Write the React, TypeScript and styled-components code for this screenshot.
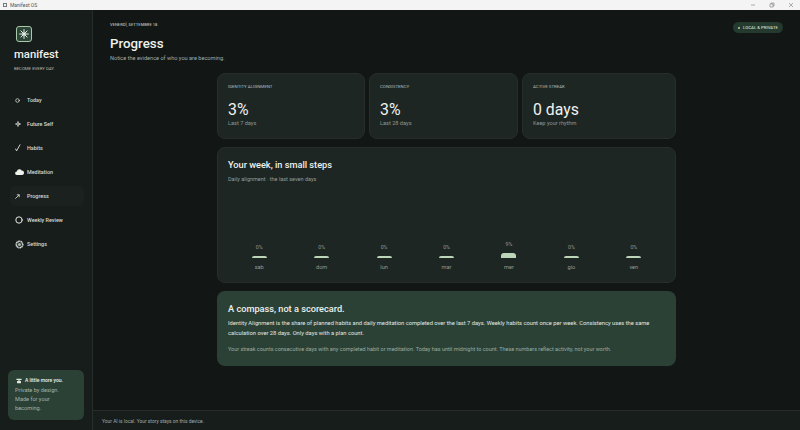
import styled, { createGlobalStyle } from "styled-components";
import { ReactNode } from "react";

const GlobalStyle = createGlobalStyle`
    html, body{
        margin:0;
        padding:0;
        width:800px;
        height:430px;
        overflow:hidden;
        background:#121716;
        font-family:Roboto, "Noto Sans", sans-serif;
    }
`;

const Shell = styled.div`
    width:800px;
    height:430px;
    display:flex;
    flex-direction:column;
`;

const TitleBar = styled.div`
    height:10px;
    flex:none;
    background:#f3f4f3;
    display:flex;
    align-items:center;
    padding:0 0 0 3px;
    gap:3px;
    color:#555;
    font-size:5px;
`;

const AppGlyph = styled.span`
    width:4px;
    height:4px;
    border:1px solid #777;
    box-sizing:border-box;
`;

const WindowButtons = styled.div`
    margin-left:auto;
    display:flex;
    align-items:center;
    color:#555;
`;

const WindowButton = styled.span`
    width:19px;
    height:10px;
    display:flex;
    align-items:center;
    justify-content:center;
`;

const Body = styled.div`
    flex:1;
    display:flex;
    min-height:0;
`;

const Sidebar = styled.aside`
    flex:none;
    border-right:1px solid #262d2b;
    background:#171d1b;
    padding:16px 8px 10px;
    width:76px;
    display:flex;
    flex-direction:column;
`;

const LogoMark = styled.div`
    width:16px;
    height:16px;
    margin-left:8px;
    box-sizing:border-box;
    border:1px solid #a9c9ab;
    border-radius:3px;
    background:#2c4437;
    display:flex;
    align-items:center;
    justify-content:center;
`;

const Brand = styled.div`
    margin:4px 0 0 6px;
    font-size:11.3px;
    line-height:17px;
    font-weight:500;
    color:#eef1ec;
`;

const Tagline = styled.div`
    margin:3px 0 0 6px;
    font-size:4.3px;
    line-height:6px;
    color:#b3bab5;
`;

const Nav = styled.nav`
    margin-top:18px;
    display:flex;
    flex-direction:column;
    gap:4px;
`;

const NavItem = styled.div<{ $active?: boolean }>`
    height:20px;
    margin-left:2px;
    border-radius:6px;
    display:flex;
    align-items:center;
    gap:3px;
    padding-left:5px;
    font-size:5.4px;
    font-weight:500;
    color:#d6dbd7;
    background:${({ $active }) => ($active ? "#1b211f" : "transparent")};
`;

const NavIcon = styled.span`
    width:9px;
    height:10px;
    flex:none;
    display:flex;
    align-items:center;
    justify-content:flex-start;
`;

const Note = styled.div`
    margin-top:auto;
    height:50px;
    box-sizing:border-box;
    border-radius:6px;
    background:#2b4136;
    padding:6px 7px;
    font-size:5.6px;
    line-height:9px;
    color:#a3b2a8;
`;

const NoteTitle = styled.div`
    display:flex;
    align-items:center;
    gap:3px;
    font-weight:500;
    color:#eef1ec;
    margin:0 0 1px 1px;
    font-size:5px;
`;

const Main = styled.main`
    flex:1;
    display:flex;
    flex-direction:column;
    min-width:0;
`;

const Scroll = styled.div`
    flex:1;
    padding:11px 17px 0;
    position:relative;
    background:#121716;
`;

const DateLine = styled.div`
    font-size:4.1px;
    line-height:8px;
    font-weight:500;
    color:#b3bab5;
`;

const PageTitle = styled.h1`
    margin:5px 0 0;
    font-size:13.3px;
    line-height:20px;
    font-weight:500;
    color:#eef1ec;
`;

const Subtitle = styled.p`
    margin:0;
    font-size:5.6px;
    line-height:9px;
    color:#a3aca6;
`;

const Badge = styled.div`
    position:absolute;
    top:12px;
    right:17px;
    height:11px;
    padding:0 5px;
    border-radius:6px;
    background:#243a2f;
    display:flex;
    align-items:center;
    gap:3px;
    font-size:4.3px;
    font-weight:500;
    color:#c5d8c6;
`;

const BadgeDot = styled.span`
    width:2px;
    height:2px;
    border-radius:50%;
    background:#b7d3b8;
`;

const Column = styled.div`
    width:459px;
    margin:10px auto 0;
    display:flex;
    flex-direction:column;
    gap:8px;
`;

const Stats = styled.div`
    display:grid;
    grid-template-columns:148px 149px 1fr;
    gap:4px;
`;

const Card = styled.section`
    background:#1e2624;
    border:1px solid #252e2b;
    border-radius:8px;
    box-sizing:border-box;
`;

const StatCard = styled(Card)`
    height:66px;
    padding:10px 10px;
`;

const StatLabel = styled.div`
    font-size:4.4px;
    line-height:6px;
    color:#b3bab5;
`;

const StatValue = styled.div`
    margin-top:10px;
    font-size:15.8px;
    line-height:19px;
    font-weight:400;
    color:#f0f2ee;
`;

const StatHint = styled.div`
    font-size:5.6px;
    line-height:8px;
    color:#8e9892;
`;

const WeekCard = styled(Card)`
    height:136px;
    padding:10px 10px 0;
    display:flex;
    flex-direction:column;
`;

const CardTitle = styled.h2`
    margin:0;
    font-size:9.2px;
    line-height:13px;
    font-weight:500;
    color:#eef1ec;
`;

const WeekHint = styled.div`
    margin-top:4px;
    font-size:5.5px;
    line-height:8px;
    color:#929c96;
`;

const Bars = styled.div`
    margin-top:58px;
    display:grid;
    grid-template-columns:repeat(7, 1fr);
`;

const BarCol = styled.div`
    height:30px;
    display:flex;
    flex-direction:column;
    align-items:center;
    justify-content:flex-end;
`;

const BarPct = styled.div`
    font-size:5.2px;
    line-height:7px;
    color:#8e9892;
    margin-bottom:5px;
`;

const Bar = styled.div<{ $tall?: boolean }>`
    width:15px;
    height:${({ $tall }) => ($tall ? "5px" : "2px")};
    background:#bcd4b8;
    border-radius:${({ $tall }) => ($tall ? "3px 3px 0 0" : "2px 2px 0 0")};
`;

const BarDay = styled.div`
    margin-top:6px;
    font-size:5.6px;
    line-height:7px;
    color:#929c96;
`;

const CompassCard = styled.section`
    height:75px;
    box-sizing:border-box;
    border-radius:8px;
    background:#2b4136;
    padding:11px 11px 0;
`;

const CompassText = styled.p`
    margin:3px 0 0;
    font-size:5.76px;
    line-height:10.4px;
    color:#e2e7e1;
    white-space:nowrap;
`;

const CompassFine = styled.p`
    margin:5.4px 0 0;
    font-size:5.47px;
    line-height:10px;
    color:#9aaca0;
    white-space:nowrap;
`;

const Footer = styled.footer`
    height:20px;
    flex:none;
    box-sizing:border-box;
    border-top:1px solid #262d2b;
    background:#171d1b;
    padding-left:9px;
    display:flex;
    align-items:center;
    font-size:4.9px;
    color:#a3aca6;
`;

const stroke = { fill: "none", stroke: "#e4e8e3", strokeLinecap: "round" as const };

const icons: Record<string, ReactNode> = {
    today: <svg width="5" height="5" viewBox="0 0 5 5"><circle cx="2.5" cy="2.5" r="1.8" {...stroke} strokeWidth=".7" /></svg>,
    future: <svg width="6" height="6" viewBox="0 0 6 6"><circle cx="3" cy="3" r="1.3" {...stroke} strokeWidth=".9" /><path d="M3 .3v1M3 4.7v1M.3 3h1M4.7 3h1" {...stroke} strokeWidth=".7" /></svg>,
    habits: <svg width="6" height="8" viewBox="0 0 6 8"><path d="M.6 5l1 1.8L5 .8" {...stroke} strokeWidth=".9" /></svg>,
    meditation: <svg width="9" height="6" viewBox="0 0 9 6"><path d="M2 6a1.8 1.8 0 0 1-.2-3.6A2.6 2.6 0 0 1 6.6 1.6 2.2 2.2 0 0 1 7 6z" fill="#eef1ec" /></svg>,
    progress: <svg width="5" height="5" viewBox="0 0 5 5"><path d="M.6 4.4L4 1M2.2.8h2v2" {...stroke} strokeWidth=".8" /></svg>,
    review: <svg width="8" height="8" viewBox="0 0 8 8"><circle cx="4" cy="4" r="3.2" {...stroke} strokeWidth="1" /></svg>,
    settings: <svg width="9" height="9" viewBox="0 0 9 9"><circle cx="4.5" cy="4.5" r="3.2" fill="none" stroke="#dfe4df" strokeWidth="1.6" strokeDasharray="1.2 .4" /><circle cx="4.5" cy="4.5" r="1.6" fill="#aab2ac" /></svg>,
};

const navItems = [
    { key: "today", label: "Today" },
    { key: "future", label: "Future Self" },
    { key: "habits", label: "Habits" },
    { key: "meditation", label: "Meditation" },
    { key: "progress", label: "Progress", active: true },
    { key: "review", label: "Weekly Review" },
    { key: "settings", label: "Settings" },
];

const stats = [
    { label: "IDENTITY ALIGNMENT", value: "3%", hint: "Last 7 days" },
    { label: "CONSISTENCY", value: "3%", hint: "Last 28 days" },
    { label: "ACTIVE STREAK", value: "0 days", hint: "Keep your rhythm" },
];

const week = [
    { day: "sab", pct: "0%" },
    { day: "dom", pct: "0%" },
    { day: "lun", pct: "0%" },
    { day: "mar", pct: "0%" },
    { day: "mer", pct: "9%", tall: true },
    { day: "gio", pct: "0%" },
    { day: "ven", pct: "0%" },
];

const App = () => {
    return (
        <Shell>
            <GlobalStyle />
            <TitleBar>
                <AppGlyph />
                Manifest OS
                <WindowButtons>
                    <WindowButton>
                        <svg width="6" height="6" viewBox="0 0 6 6"><path d="M1 3h4" stroke="#666" strokeWidth=".5" /></svg>
                    </WindowButton>
                    <WindowButton>
                        <svg width="6" height="6" viewBox="0 0 6 6"><path d="M1 2h3v3H1zM2 2V1h3v3H4" fill="none" stroke="#666" strokeWidth=".5" /></svg>
                    </WindowButton>
                    <WindowButton>
                        <svg width="6" height="6" viewBox="0 0 6 6"><path d="M1 1l4 4M5 1L1 5" stroke="#666" strokeWidth=".5" /></svg>
                    </WindowButton>
                </WindowButtons>
            </TitleBar>
            <Body>
                <Sidebar>
                    <LogoMark>
                        <svg width="10" height="10" viewBox="0 0 10 10">
                            <path d="M5 .6v8.8M.6 5h8.8M1.9 1.9l6.2 6.2M8.1 1.9L1.9 8.1" stroke="#e8efe6" strokeWidth="1" strokeLinecap="round" />
                            <circle cx="5" cy="5" r="1.6" fill="#e8efe6" />
                        </svg>
                    </LogoMark>
                    <Brand>manifest</Brand>
                    <Tagline>BECOME EVERY DAY.</Tagline>
                    <Nav>
                        {navItems.map((item) => (
                            <NavItem key={item.key} $active={item.active}>
                                <NavIcon>{icons[item.key]}</NavIcon>
                                {item.label}
                            </NavItem>
                        ))}
                    </Nav>
                    <Note>
                        <NoteTitle>
                            <svg width="6" height="6" viewBox="0 0 7 6"><path d="M.5 .5h6v1.2H4.2v1.4h1.6V5.5H1.2V3.1h1.6V1.7H.5z" fill="#dfe6dd" /></svg>
                            A little more you.
                        </NoteTitle>
                        Private by design.
                        <br />
                        Made for your
                        <br />
                        becoming.
                    </Note>
                </Sidebar>
                <Main>
                    <Scroll>
                        <DateLine>VENERDÌ, SETTEMBRE 18</DateLine>
                        <PageTitle>Progress</PageTitle>
                        <Subtitle>Notice the evidence of who you are becoming.</Subtitle>
                        <Badge>
                            <BadgeDot />
                            LOCAL &amp; PRIVATE
                        </Badge>
                        <Column>
                            <Stats>
                                {stats.map((stat) => (
                                    <StatCard key={stat.label}>
                                        <StatLabel>{stat.label}</StatLabel>
                                        <StatValue>{stat.value}</StatValue>
                                        <StatHint>{stat.hint}</StatHint>
                                    </StatCard>
                                ))}
                            </Stats>
                            <WeekCard>
                                <CardTitle>Your week, in small steps</CardTitle>
                                <WeekHint>Daily alignment · the last seven days</WeekHint>
                                <Bars>
                                    {week.map((item) => (
                                        <BarCol key={item.day}>
                                            <BarPct>{item.pct}</BarPct>
                                            <Bar $tall={item.tall} />
                                            <BarDay>{item.day}</BarDay>
                                        </BarCol>
                                    ))}
                                </Bars>
                            </WeekCard>
                            <CompassCard>
                                <CardTitle>A compass, not a scorecard.</CardTitle>
                                <CompassText>
                                    Identity Alignment is the share of planned habits and daily meditation completed over the last 7 days. Weekly habits count once per week. Consistency uses the same
                                    <br />
                                    calculation over 28 days. Only days with a plan count.
                                </CompassText>
                                <CompassFine>
                                    Your streak counts consecutive days with any completed habit or meditation. Today has until midnight to count. These numbers reflect activity, not your worth.
                                </CompassFine>
                            </CompassCard>
                        </Column>
                    </Scroll>
                    <Footer>Your AI is local. Your story stays on this device.</Footer>
                </Main>
            </Body>
        </Shell>
    );
};

export default App;
